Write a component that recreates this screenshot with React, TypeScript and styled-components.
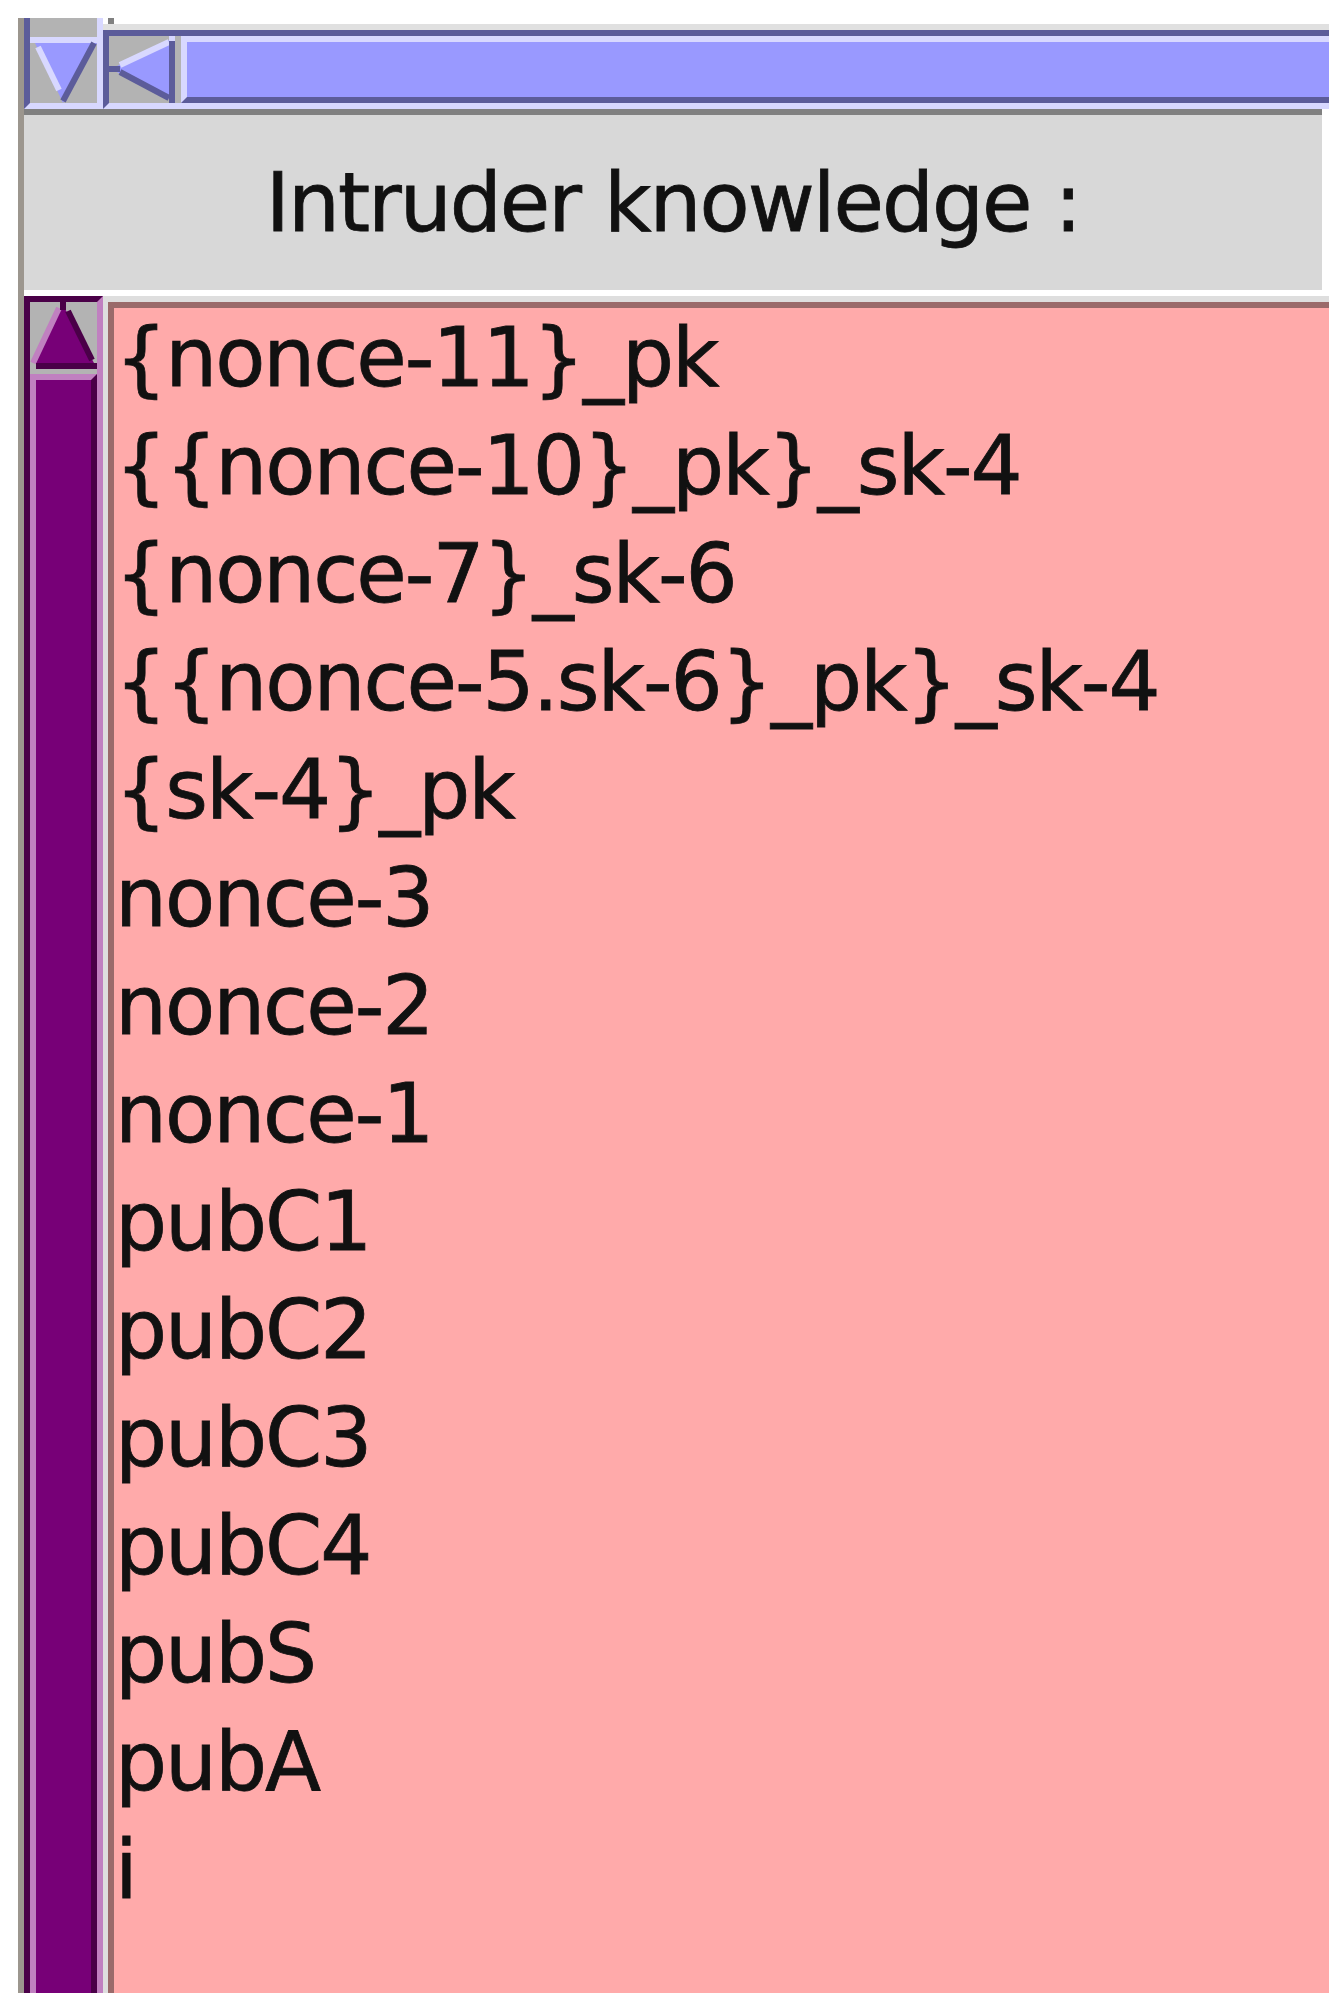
import React from "react";
import styled, { createGlobalStyle } from "styled-components";

const items = [
  "{nonce-11}_pk",
  "{{nonce-10}_pk}_sk-4",
  "{nonce-7}_sk-6",
  "{{nonce-5.sk-6}_pk}_sk-4",
  "{sk-4}_pk",
  "nonce-3",
  "nonce-2",
  "nonce-1",
  "pubC1",
  "pubC2",
  "pubC3",
  "pubC4",
  "pubS",
  "pubA",
  "i",
];

const GlobalStyle = createGlobalStyle`
  html, body {
    margin: 0;
    padding: 0;
    background: #ffffff;
    overflow: hidden;
  }
  body {
    font-family: "DejaVu Sans", "Liberation Sans", sans-serif;
  }
`;

const Frame = styled.div`
  display: flex;
  flex-direction: column;
  margin: 18px 0 0 18px;
  width: 1305px;
  height: 1975px;
  border-left: 6px solid #9c968e;
`;

const TopStrip = styled.div`
  display: flex;
  height: 91px;
`;

const DownButton = styled.div`
  width: 67px;
  height: 85px;
  background: #b3b3b3;
  border-left: 6px solid #5c5c9a;
  border-right: 6px solid #d8d8ff;
  border-bottom: 6px solid #d8d8ff;
  svg {
    display: block;
  }
`;

const HScrollArea = styled.div`
  flex: 1;
  display: flex;
  flex-direction: column;
`;

const TopGap = styled.div`
  display: flex;
  height: 6px;
  background: #ffffff;
  border-bottom: 6px solid #e0e0e0;
`;

const Nub = styled.div`
  width: 6px;
  height: 6px;
  margin-left: 5px;
  background: #808080;
`;

const Track = styled.div`
  flex: 1;
  display: flex;
  gap: 6px;
  background: #b3b3b3;
  border-top: 6px solid #5c5c9a;
  border-left: 6px solid #5c5c9a;
  border-bottom: 6px solid #d8d8ff;
`;

const LeftButton = styled.div`
  width: 66px;
  svg {
    display: block;
  }
`;

const HThumb = styled.div`
  flex: 1;
  background: #9999ff;
  border-left: 6px solid #d8d8ff;
  border-top: 6px solid #d8d8ff;
  border-bottom: 6px solid #5c5c9a;
`;

const Header = styled.div`
  display: flex;
  align-items: center;
  justify-content: center;
  height: 175px;
  margin-right: 7px;
  background: #d8d8d8;
  border-top: 6px solid #808080;
  font-size: 82px;
  letter-spacing: -2px;
  color: #111111;
  -webkit-text-stroke: 0.8px #111111;
  white-space: nowrap;
`;

const Spacer = styled.div`
  height: 6px;
  background: #ffffff;
`;

const LowerPane = styled.div`
  flex: 1;
  display: flex;
  min-height: 0;
`;

const VScroll = styled.div`
  width: 67px;
  display: flex;
  flex-direction: column;
  border-top: 6px solid #4a0048;
  border-left: 6px solid #4a0048;
  border-right: 6px solid #c080c0;
`;

const UpButton = styled.div`
  height: 72px;
  background: #b3b3b3;
  svg {
    display: block;
  }
`;

const VThumb = styled.div`
  flex: 1;
  background: #770077;
  border-top: 6px solid #c080c0;
  border-left: 6px solid #c080c0;
  border-right: 6px solid #4a0048;
`;

const ListWrap = styled.div`
  flex: 1;
  display: flex;
  padding: 6px 0 0 5px;
  background: #dedede;
`;

const ListBox = styled.div`
  flex: 1;
  display: flex;
  flex-direction: column;
  padding-left: 1px;
  background: #ffaaaa;
  border-top: 6px solid #9a6a6a;
  border-left: 6px solid #9a6a6a;
  overflow: hidden;
`;

const Row = styled.div`
  height: 108px;
  line-height: 100px;
  font-size: 82px;
  letter-spacing: -2px;
  color: #111111;
  -webkit-text-stroke: 0.8px #111111;
  white-space: nowrap;
`;

const DownArrow = () => (
  <svg width="67" height="85" viewBox="0 0 67 85">
    <rect x="0" y="19" width="67" height="6" fill="#d8d8ff" />
    <polygon points="5,25 67,25 33,85" fill="#9999ff" />
    <line x1="8" y1="29" x2="29" y2="72" stroke="#d8d8ff" strokeWidth="6" />
    <line x1="64" y1="25" x2="33" y2="83" stroke="#5c5c9a" strokeWidth="6" />
  </svg>
);

const LeftArrow = () => (
  <svg width="66" height="67" viewBox="0 0 66 67">
    <polygon points="2,33 62,3 62,64" fill="#9999ff" />
    <line x1="11" y1="29" x2="60" y2="6" stroke="#d8d8ff" strokeWidth="6" />
    <line x1="11" y1="36" x2="60" y2="62" stroke="#5c5c9a" strokeWidth="6" />
    <rect x="0" y="30" width="11" height="6" fill="#5c5c9a" />
    <rect x="60" y="5" width="6" height="62" fill="#5c5c9a" />
    <rect x="60" y="0" width="6" height="5" fill="#d8d8ff" />
  </svg>
);

const UpArrow = () => (
  <svg width="67" height="72" viewBox="0 0 67 72">
    <polygon points="33,3 3,61 64,61" fill="#770077" />
    <line x1="29" y1="6" x2="3" y2="61" stroke="#c080c0" strokeWidth="6" />
    <line x1="38" y1="9" x2="62" y2="58" stroke="#4a0048" strokeWidth="6" />
    <rect x="30" y="0" width="6" height="8" fill="#4a0048" />
    <rect x="6" y="61" width="61" height="6" fill="#4a0048" />
  </svg>
);

export default function App() {
  return (
    <>
      <GlobalStyle />
      <Frame>
        <TopStrip>
          <DownButton>
            <DownArrow />
          </DownButton>
          <HScrollArea>
            <TopGap>
              <Nub />
            </TopGap>
            <Track>
              <LeftButton>
                <LeftArrow />
              </LeftButton>
              <HThumb />
            </Track>
          </HScrollArea>
        </TopStrip>
        <Header>Intruder knowledge :</Header>
        <Spacer />
        <LowerPane>
          <VScroll>
            <UpButton>
              <UpArrow />
            </UpButton>
            <VThumb />
          </VScroll>
          <ListWrap>
            <ListBox>
              {items.map((item) => (
                <Row key={item}>{item}</Row>
              ))}
            </ListBox>
          </ListWrap>
        </LowerPane>
      </Frame>
    </>
  );
}
